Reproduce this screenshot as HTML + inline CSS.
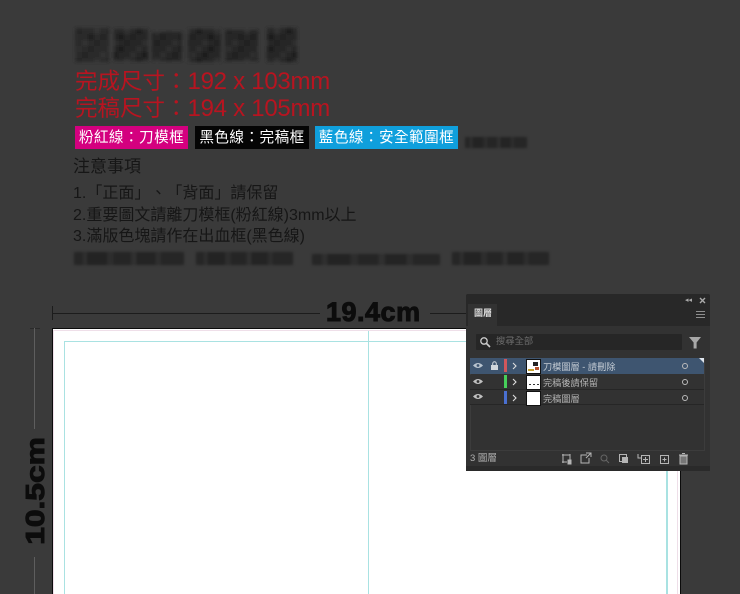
<!DOCTYPE html>
<html lang="zh-Hant">
<head>
<meta charset="utf-8">
<style>
html,body{margin:0;padding:0;background:#3a3a3a}
#p{position:relative;width:740px;height:594px;overflow:hidden;background:#3a3a3a;font-family:"Liberation Sans","Noto Sans CJK TC",sans-serif;text-spacing-trim:space-all}
#p div,#p svg{position:absolute}
.t{white-space:nowrap;line-height:1}
.red{color:#b81420;font-size:22.5px;left:75px;font-weight:400;filter:blur(.3px)}
.red b{font-weight:400;font-size:24px;letter-spacing:-.27px}
.badge{color:#fff;font-size:14.6px;height:23px;line-height:25px;top:126px;text-align:center;white-space:nowrap;letter-spacing:.45px}
.note{color:#161616;font-size:16px;left:73px;white-space:nowrap;line-height:1;filter:blur(.25px)}
.blur{background:linear-gradient(90deg,#262626 0 8%,#2f2f2f 8% 12%,#232323 12% 30%,#2d2d2d 30% 36%,#252525 36% 52%,#303030 52% 57%,#242424 57% 74%,#2e2e2e 74% 79%,#262626 79% 100%);filter:blur(1.4px)}
.row{left:470px;width:234px;height:15px;border-bottom:1px solid #262626}
.lbl{color:#b5b5b5;font-size:9.2px;left:543px;white-space:nowrap;line-height:1;filter:blur(.25px)}
.thumb{left:526px;width:13px;height:13px;background:#fff;border:1px solid #111}
.bar{left:504px;width:3px;height:13px}
.cir{left:682px;width:4px;height:4px;border:1px solid #bbb;border-radius:50%}
</style>
</head>
<body>
<div id="p">
  <!-- pixelated heading -->
  <svg style="left:70px;top:22px" width="235" height="46" viewBox="0 0 235 46">
    <defs>
      <filter id="b" x="-10%" y="-10%" width="120%" height="120%"><feGaussianBlur stdDeviation="1.5"/></filter>
      <pattern id="q" width="30" height="30" patternUnits="userSpaceOnUse">
        <rect width="30" height="30" fill="#252525"/>
        <rect x="0" y="0" width="6" height="6" fill="#2f2f2f"/><rect x="12" y="0" width="6" height="6" fill="#1e1e1e"/>
        <rect x="24" y="6" width="6" height="6" fill="#303030"/><rect x="6" y="6" width="6" height="6" fill="#1f1f1f"/>
        <rect x="18" y="12" width="6" height="6" fill="#1d1d1d"/><rect x="0" y="12" width="6" height="6" fill="#202020"/>
        <rect x="12" y="18" width="6" height="6" fill="#2f2f2f"/><rect x="24" y="18" width="6" height="6" fill="#202020"/>
        <rect x="6" y="24" width="6" height="6" fill="#2d2d2d"/><rect x="18" y="24" width="6" height="6" fill="#1e1e1e"/>
      </pattern>
    </defs>
    <g filter="url(#b)" fill="url(#q)">
      <rect x="5" y="6" width="34" height="34" opacity=".8"/>
      <rect x="44" y="7" width="34" height="32"/>
      <rect x="82" y="10" width="30" height="29" opacity=".9"/>
      <rect x="118" y="7" width="33" height="33"/>
      <rect x="155" y="8" width="33" height="31" opacity=".9"/>
      <rect x="197" y="6" width="30" height="34"/>
    </g>
  </svg>

  <div class="t red" style="top:70px">完成尺寸：<b>192 x 103mm</b></div>
  <div class="t red" style="top:97px">完稿尺寸：<b>194 x 105mm</b></div>

  <div class="badge" style="left:75px;width:113px;background:#d4007f">粉紅線：刀模框</div>
  <div class="badge" style="left:195px;width:114px;background:#050505">黑色線：完稿框</div>
  <div class="badge" style="left:315px;width:143px;background:#0f9fdc">藍色線：安全範圍框</div>
  <div class="blur" style="left:465px;top:137px;width:62px;height:11px"></div>

  <div class="note" style="top:158px;font-size:17px">注意事項</div>
  <div class="note" style="top:186px">1.「正面」、「背面」請保留</div>
  <div class="note" style="top:208px">2.重要圖文請離刀模框(粉紅線)3mm以上</div>
  <div class="note" style="top:229px">3.滿版色塊請作在出血框(黑色線)</div>
  <div class="blur" style="left:74px;top:252px;width:110px;height:13px"></div>
  <div class="blur" style="left:196px;top:252px;width:97px;height:13px"></div>
  <div class="blur" style="left:312px;top:254px;width:128px;height:11px"></div>
  <div class="blur" style="left:452px;top:252px;width:97px;height:13px"></div>

  <!-- dimension 19.4cm -->
  <div style="left:52px;top:306px;width:1px;height:14px;background:#1c1c1c"></div>
  <div style="left:52px;top:313px;width:268px;height:1px;background:#1c1c1c"></div>
  <div style="left:430px;top:313px;width:36px;height:1px;background:#1c1c1c"></div>
  <div class="t" style="left:326px;top:299px;font-size:27px;font-weight:700;letter-spacing:.5px;color:#0c0c0c;-webkit-text-stroke:1px #0c0c0c">19.4cm</div>

  <!-- dimension 10.5cm -->
  <div style="left:30px;top:328px;width:10px;height:1px;background:#2a2a2a"></div>
  <div style="left:34px;top:328px;width:1px;height:101px;background:#5e5e5e"></div>
  <div style="left:34px;top:557px;width:1px;height:37px;background:#5e5e5e"></div>
  <div class="t" style="left:-25px;top:478px;width:120px;text-align:center;font-size:26px;font-weight:700;color:#0c0c0c;-webkit-text-stroke:1px #0c0c0c;transform:rotate(-90deg) scaleX(1.22)">10.5cm</div>

  <!-- artboard -->
  <div style="left:52px;top:328px;width:629px;height:266px;background:#0b0b0b"></div>
  <div style="left:53px;top:329px;width:627px;height:265px;background:#fff"></div>
  <div style="left:53px;top:330px;width:625px;height:264px;box-sizing:border-box;border:solid #efdfe9;border-width:1px 1px 0 1px"></div>
  <div style="left:64px;top:341px;width:604px;height:253px;box-sizing:border-box;border:solid #a9e2e2;border-width:1px 2px 0 1px"></div>
  <div style="left:368px;top:331px;width:1px;height:263px;background:#a9e2e2"></div>

  <!-- panel -->
  <div style="left:466px;top:294px;width:244px;height:177px;background:#323232;border-radius:2px 2px 0 0"></div>
  <div style="left:466px;top:294px;width:244px;height:32px;background:#282828;border-radius:2px 2px 0 0"></div>
  <div style="left:468px;top:304px;width:29px;height:22px;background:#323232"></div>
  <div class="t" style="left:474px;top:309px;font-size:9px;color:#dcdcdc;font-weight:700">圖層</div>
  <div class="t" style="left:685px;top:297px;font-size:7px;color:#aaa">◂◂</div>
  <svg style="left:699px;top:297px" width="7" height="7" viewBox="0 0 7 7"><path d="M1 1L6 6M6 1L1 6" stroke="#aaa" stroke-width="1.4"/></svg>
  <svg style="left:696px;top:311px" width="9" height="7" viewBox="0 0 9 7"><path d="M0 .5H9M0 3.5H9M0 6.5H9" stroke="#8f8f8f" stroke-width="1"/></svg>

  <!-- search -->
  <div style="left:476px;top:334px;width:206px;height:16px;background:#262626;border-radius:1px"></div>
  <svg style="left:479px;top:336px" width="12" height="12" viewBox="0 0 12 12"><circle cx="5" cy="5" r="3.2" fill="none" stroke="#ccc" stroke-width="1.3"/><path d="M7.5 7.5L11 11" stroke="#ccc" stroke-width="1.6"/></svg>
  <div class="t" style="left:496px;top:337px;font-size:9.3px;color:#6c6c6c">搜尋全部</div>
  <svg style="left:689px;top:336px" width="13" height="13" viewBox="0 0 13 13"><path d="M0 1H12L7.6 6.5V12.5H4.6V6.5Z" fill="#a8a8a8"/></svg>

  <!-- list -->
  <div style="left:470px;top:358px;width:235px;height:93px;box-sizing:border-box;border:1px solid #3c3c3c;border-top:0"></div>
  <div class="row" style="top:358px;height:16px;border:0;background:#3e5570"></div>
  <div class="row" style="top:375px;height:14px;background:#323232"></div>
  <div class="row" style="top:390px;height:14px;background:#323232"></div>
  <div style="left:699px;top:358px;width:0;height:0;border-top:5px solid #dfe6ee;border-left:5px solid transparent"></div>

  <!-- eyes -->
  <svg style="left:473px;top:362px" width="10" height="7" viewBox="0 0 10 7"><path d="M0 3.5Q5 -1.5 10 3.5Q5 8.5 0 3.5Z" fill="#b9c4cf"/><circle cx="5" cy="3.5" r="1.4" fill="#3e5570"/></svg>
  <svg style="left:473px;top:378px" width="10" height="7" viewBox="0 0 10 7"><path d="M0 3.5Q5 -1.5 10 3.5Q5 8.5 0 3.5Z" fill="#c0c0c0"/><circle cx="5" cy="3.5" r="1.4" fill="#323232"/></svg>
  <svg style="left:473px;top:393px" width="10" height="7" viewBox="0 0 10 7"><path d="M0 3.5Q5 -1.5 10 3.5Q5 8.5 0 3.5Z" fill="#c0c0c0"/><circle cx="5" cy="3.5" r="1.4" fill="#323232"/></svg>
  <!-- lock -->
  <svg style="left:491px;top:361px" width="7" height="9" viewBox="0 0 7 9"><path d="M1.7 4V2.6a1.8 1.8 0 0 1 3.6 0V4" fill="none" stroke="#d0d6dc" stroke-width="1"/><rect x="0" y="4" width="7" height="5" fill="#d0d6dc"/></svg>

  <div class="bar" style="top:359px;background:#d0575c"></div>
  <div class="bar" style="top:375px;background:#46cf5a"></div>
  <div class="bar" style="top:391px;background:#4a70d0"></div>

  <svg style="left:512px;top:362px" width="5" height="8" viewBox="0 0 5 8"><path d="M1 1L4 4L1 7" fill="none" stroke="#ddd" stroke-width="1.1"/></svg>
  <svg style="left:512px;top:378px" width="5" height="8" viewBox="0 0 5 8"><path d="M1 1L4 4L1 7" fill="none" stroke="#ddd" stroke-width="1.1"/></svg>
  <svg style="left:512px;top:394px" width="5" height="8" viewBox="0 0 5 8"><path d="M1 1L4 4L1 7" fill="none" stroke="#ddd" stroke-width="1.1"/></svg>

  <div class="thumb" style="top:359px"></div>
  <svg style="left:527px;top:360px" width="13" height="13" viewBox="0 0 13 13"><path d="M1 9H7V11H1Z" fill="#c9a431"/><path d="M6 2H11V6H6Z" fill="#222"/><path d="M8 7H12V10H8Z" fill="#b5502e"/></svg>
  <div class="thumb" style="top:375px"></div>
  <svg style="left:527px;top:376px" width="13" height="13" viewBox="0 0 13 13"><path d="M2 8.5H4M6 8.5H8M10 8.5H12" stroke="#333" stroke-width="1"/></svg>
  <div class="thumb" style="top:391px"></div>

  <div class="lbl" style="top:363px;color:#c4ccd4">刀模圖層 - 請刪除</div>
  <div class="lbl" style="top:379px">完稿後請保留</div>
  <div class="lbl" style="top:395px">完稿圖層</div>

  <div class="cir" style="top:363px"></div>
  <div class="cir" style="top:379px"></div>
  <div class="cir" style="top:395px"></div>

  <!-- footer -->
  <div class="t" style="left:470px;top:454px;font-size:9.5px;color:#b0b0b0">3 圖層</div>
  <svg style="left:560px;top:452px" width="132" height="14" viewBox="0 0 132 14" fill="none" stroke="#b5b5b5" stroke-width="1">
    <path d="M2 3H10M3 2V11M10 2V8M2 10H7"/><rect x="8" y="8" width="3" height="4" fill="#b5b5b5"/>
    <path d="M27 3H21V11H29V6M26 1H31V5M31 1L26 6"/>
    <circle cx="44" cy="6" r="3" stroke="#666"/><path d="M46 8L49 11" stroke="#666"/>
    <rect x="59.500" y="2.500" width="7" height="7"/><rect x="62" y="5" width="6" height="6" fill="#b5b5b5" stroke="none"/>
    <rect x="81.500" y="3.500" width="8" height="8"/><path d="M85.500 5V10M83 7.500H88M78 2V6H81"/>
    <rect x="100.500" y="3.500" width="8" height="8"/><path d="M104.500 5.500V9.500M102.500 7.500H106.500"/>
    <rect x="120" y="4" width="7" height="8" fill="#777"/><path d="M119 3H128M122 1.500H125"/>
  </svg>

  <div style="left:466px;top:466px;width:244px;height:5px;background:#2a2a2a"></div>
</div>
</body>
</html>
